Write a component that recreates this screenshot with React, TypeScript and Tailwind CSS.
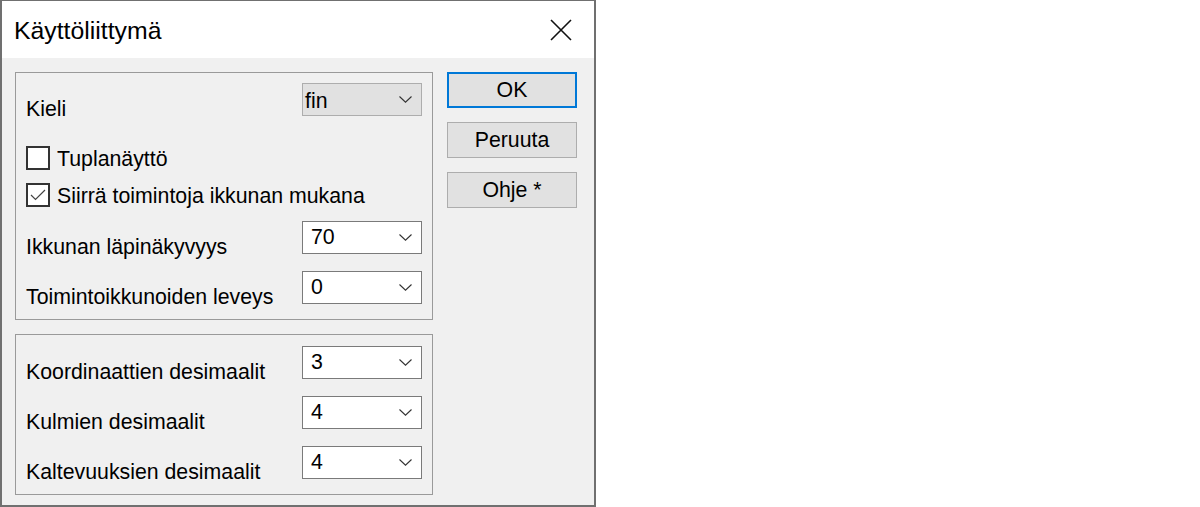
import React from "react";

const font = { fontFamily: '"Liberation Sans", Arial, sans-serif' };

function Chevron() {
  return (
    <svg width="13" height="7" viewBox="0 0 13 7" className="self-center shrink-0">
      <path d="M0.5 0.5 L6.5 6.2 L12.5 0.5" fill="none" stroke="#333" strokeWidth="1.1" />
    </svg>
  );
}

function Combo({ value, disabled = false }: { value: string; disabled?: boolean }) {
  return (
    <div
      className={
        disabled
          ? "w-[120px] h-[33px] shrink-0 flex justify-between border border-[#adadad] bg-[#e1e1e1] pl-[2px] pr-[9px]"
          : "w-[120px] h-[33px] shrink-0 flex justify-between border border-[#7a7a7a] bg-white pl-[8px] pr-[9px]"
      }
    >
      <span className={disabled ? "leading-[16px] pt-[9px]" : "leading-[16px] pt-[7px]"}>{value}</span>
      <Chevron />
    </div>
  );
}

function Row({ label, value, disabled = false, className = "" }: { label: string; value: string; disabled?: boolean; className?: string }) {
  return (
    <div className={"flex justify-between items-end " + className}>
      <span className="leading-[16px] mb-[-1px]">{label}</span>
      <Combo value={value} disabled={disabled} />
    </div>
  );
}

function Check({ label, checked, className = "" }: { label: string; checked: boolean; className?: string }) {
  return (
    <div className={"flex items-start gap-[7px] " + className}>
      <div className="w-[24px] h-[24px] border-2 border-[#333] bg-white shrink-0 flex items-center justify-center">
        {checked && (
          <svg width="20" height="20" viewBox="0 0 20 20">
            <path d="M3 10 L7.5 14.5 L17 5" fill="none" stroke="#444" strokeWidth="1.2" />
          </svg>
        )}
      </div>
      <span className="leading-[16px] mt-[5px]">{label}</span>
    </div>
  );
}

function Btn({ label, focused = false }: { label: string; focused?: boolean }) {
  return (
    <div
      className={
        focused
          ? "w-[130px] h-[36px] flex items-center justify-center bg-[#e1e1e1] border-2 border-[#0078d7] leading-[16px]"
          : "w-[130px] h-[36px] flex items-center justify-center bg-[#e1e1e1] border border-[#adadad] leading-[16px]"
      }
    >
      {label}
    </div>
  );
}

export default function App() {
  return (
    <div className="w-[1200px] h-[507px] bg-white flex text-[21.3px] text-black" style={font}>
      <div className="w-[596px] h-[507px] flex flex-col border-t border-l-2 border-r-2 border-b-2 border-[#707070]">
        <div className="h-[57px] bg-white flex shrink-0">
          <span className="pl-[12px] pt-[22px] leading-[16px] text-[24.8px]">Käyttöliittymä</span>
          <svg width="22" height="22" viewBox="0 0 22 22" className="ml-auto mr-[22px] mt-[18px]">
            <path d="M1 1 L21 21 M21 1 L1 21" stroke="#111" strokeWidth="1.6" fill="none" />
          </svg>
        </div>
        <div className="flex-1 bg-[#f0f0f0] flex pl-[13px] pt-[14px]">
          <div className="w-[418px] flex flex-col">
            <div className="h-[248px] border border-[#9a9a9a] pl-[10px] pr-[10px] pt-[10px] flex flex-col">
              <Row label="Kieli" value="fin" disabled />
              <Check label="Tuplanäyttö" checked={false} className="mt-[30px]" />
              <Check label="Siirrä toimintoja ikkunan mukana" checked className="mt-[13px]" />
              <Row label="Ikkunan läpinäkyvyys" value="70" className="mt-[14px]" />
              <Row label="Toimintoikkunoiden leveys" value="0" className="mt-[17px]" />
            </div>
            <div className="h-[161px] mt-[14px] border border-[#9a9a9a] pl-[10px] pr-[10px] pt-[11px] flex flex-col">
              <Row label="Koordinaattien desimaalit" value="3" />
              <Row label="Kulmien desimaalit" value="4" className="mt-[17px]" />
              <Row label="Kaltevuuksien desimaalit" value="4" className="mt-[17px]" />
            </div>
          </div>
          <div className="ml-[14px] flex flex-col gap-[14px]">
            <Btn label="OK" focused />
            <Btn label="Peruuta" />
            <Btn label="Ohje *" />
          </div>
        </div>
      </div>
    </div>
  );
}
